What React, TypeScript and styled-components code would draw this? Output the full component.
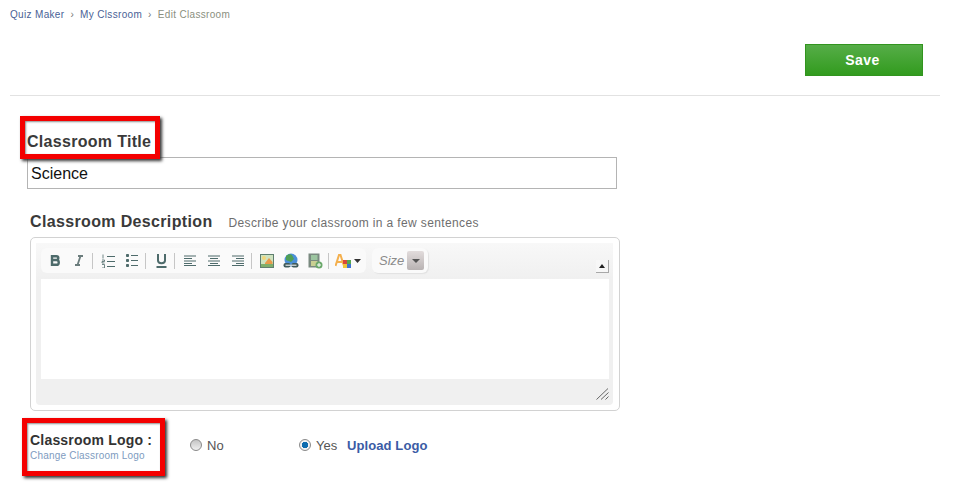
import React from "react";
import styled, { createGlobalStyle } from "styled-components";

const GlobalStyle = createGlobalStyle`
  html, body { margin: 0; padding: 0; background: #fff; }
  body { font-family: "Liberation Sans", Arial, sans-serif; }
`;

const Page = styled.div`
  width: 953px;
  height: 494px;
  overflow: hidden;
  box-sizing: border-box;
  padding: 8px 13px 0 10px;
`;

const Breadcrumb = styled.nav`
  display: flex;
  align-items: center;
  height: 13px;
  font-size: 10px;
  line-height: 13px;
  letter-spacing: 0.33px;
`;

const Crumb = styled.a<{ $current?: boolean }>`
  color: ${(p) => (p.$current ? "#8a8f80" : "#4a5f96")};
`;

const CrumbSep = styled.span`
  color: #777;
  margin: 0 6px 0 6px;
  font-size: 10px;
`;

const ActionBar = styled.div`
  display: flex;
  justify-content: flex-end;
  padding: 23px 17px 19px 0;
  border-bottom: 1px solid #e2e2e2;
`;

const SaveButton = styled.button`
  width: 118px;
  height: 32px;
  box-sizing: border-box;
  border: 1px solid #32941f;
  background: linear-gradient(#56ad48, #329b1e);
  color: #fff;
  font: bold 14px "Liberation Sans", Arial, sans-serif;
  letter-spacing: 0.4px;
  padding: 0 3px 0 0;
`;

const Form = styled.div`
  position: relative;
  padding: 36px 0 0 17px;
`;

const TitleLabel = styled.label`
  display: block;
  height: 25px;
  font-size: 16px;
  line-height: 20px;
  font-weight: bold;
  color: #3a3a3a;
  letter-spacing: 0.3px;
`;

const TitleInput = styled.input`
  display: block;
  width: 590px;
  height: 32px;
  box-sizing: border-box;
  border: 1px solid #b4b4b4;
  padding: 2px 3px 0;
  font: 16px "Liberation Sans", Arial, sans-serif;
  color: #111;
  outline: none;
`;

const DescriptionHead = styled.div`
  display: flex;
  align-items: baseline;
  gap: 16px;
  padding: 24px 0 0 3px;
  height: 24px;
`;

const DescriptionTitle = styled.h2`
  margin: 0;
  font-size: 16px;
  line-height: 18px;
  color: #3a3a3a;
  letter-spacing: 0.35px;
`;

const Hint = styled.span`
  font-size: 12px;
  color: #6e6e6e;
  letter-spacing: 0.37px;
`;

const EditorFrame = styled.div`
  width: 590px;
  height: 174px;
  box-sizing: border-box;
  margin-left: 3px;
  border: 1px solid #d2d2d2;
  border-radius: 5px;
  padding: 5px 6px 5px 5px;
`;

const EditorInner = styled.div`
  height: 162px;
  display: flex;
  flex-direction: column;
  background: #f0f0f0;
  border-radius: 4px;
`;

const ToolbarRow = styled.div`
  height: 36px;
  box-sizing: border-box;
  display: flex;
  align-items: flex-start;
  gap: 6px;
  padding: 5px 0 0 5px;
  background: linear-gradient(#f8f8f8, #f0f0f0);
  position: relative;
`;

const ToolGroup = styled.div`
  display: flex;
  align-items: center;
  height: 25px;
  background: #fafafa;
  border-radius: 6px;
  padding: 0 5px 0 2px;
`;

const ToolSlot = styled.span<{ $w?: number }>`
  display: flex;
  align-items: center;
  justify-content: center;
  width: ${(p) => p.$w ?? 24}px;
  height: 25px;
`;

const ToolSep = styled.span`
  width: 1px;
  height: 16px;
  background: #c6c6c6;
  margin: 0 3px 0 1px;
`;

const SizeBox = styled.div`
  display: flex;
  align-items: center;
  justify-content: space-between;
  width: 56px;
  height: 25px;
  box-sizing: border-box;
  background: #fafafa;
  border-radius: 6px;
  box-shadow: 1px 1px 1px #e2e2e2;
  padding: 0 4px 0 7px;
  font-size: 13px;
  font-style: italic;
  color: #8c8c8c;
`;

const SizeArrow = styled.span`
  display: flex;
  align-items: center;
  justify-content: center;
  width: 17px;
  height: 19px;
  border-radius: 2px;
  background: linear-gradient(#e2dcdc, #b8b2b2);

  &::after {
    content: "";
    border-left: 4px solid transparent;
    border-right: 4px solid transparent;
    border-top: 4px solid #555;
  }
`;

const CollapseButton = styled.button`
  position: absolute;
  right: 4px;
  top: 17px;
  width: 13px;
  height: 13px;
  box-sizing: border-box;
  padding: 0;
  border: 0;
  border-right: 1px solid #a8a8a8;
  border-bottom: 1px solid #a8a8a8;
  background: #f7f7f7;
  display: flex;
  align-items: center;
  justify-content: center;

  &::after {
    content: "";
    border-left: 3px solid transparent;
    border-right: 3px solid transparent;
    border-bottom: 4px solid #222;
  }
`;

const EditArea = styled.div`
  height: 100px;
  margin: 0 4px 0 5px;
  background: #fff;
`;

const EditorFooter = styled.div`
  flex: 1;
  display: flex;
  justify-content: flex-end;
  align-items: flex-end;
  padding: 0 4px 5px 0;
`;

const LogoRow = styled.div`
  display: flex;
  align-items: flex-start;
  padding: 22px 0 0 3px;
`;

const LogoLabel = styled.div`
  width: 160px;
`;

const LogoTitle = styled.div`
  font-size: 14px;
  line-height: 15px;
  font-weight: bold;
  color: #333;
  letter-spacing: 0.2px;
`;

const LogoLink = styled.a`
  display: block;
  font-size: 10px;
  line-height: 13px;
  margin-top: 1px;
  color: #7e9bc0;
  letter-spacing: 0.2px;
`;

const RadioOption = styled.label<{ $w: number }>`
  display: flex;
  align-items: center;
  gap: 5px;
  width: ${(p) => p.$w}px;
  height: 14px;
  margin-top: 5px;
  font-size: 13px;
  color: #555;
`;

const RadioDot = styled.span<{ $on?: boolean }>`
  width: 12px;
  height: 12px;
  margin-top: -1px;
  box-sizing: border-box;
  border-radius: 50%;
  border: 1px solid #8a8a8a;
  background: ${(p) =>
    p.$on
      ? "radial-gradient(circle, #0f6cae 0 3px, #f2f2f2 3.5px)"
      : "linear-gradient(#c4c4c4, #f0f0f0)"};
`;

const UploadLink = styled.a`
  margin: 6px 0 0 -23px;
  font-size: 13px;
  line-height: 14px;
  font-weight: bold;
  letter-spacing: 0.1px;
  color: #3b5ba5;
`;

const Highlight = styled.div<{ $left: number; $top: number; $w: number; $h: number }>`
  position: absolute;
  left: ${(p) => p.$left}px;
  top: ${(p) => p.$top}px;
  width: ${(p) => p.$w}px;
  height: ${(p) => p.$h}px;
  box-sizing: border-box;
  border: 5px solid #f40000;
  box-shadow: 2px 2px 3px #333, inset 1px 1px 2px rgba(0, 0, 0, 0.45);
  pointer-events: none;
`;

const ink = "#4e6b6b";

const BoldIcon = () => (
  <svg width="10" height="11" viewBox="0 0 10 11" fill="none" stroke={ink} strokeWidth="2.4">
    <path d="M1 1.200h5.500c2.400 0 2.400 3.800 0 3.800H1M6.500 5c3 0 3 4.800 0 4.800H1M2 0v11" />
  </svg>
);

const ItalicIcon = () => (
  <svg width="8" height="11" viewBox="0 0 8 11" fill="none" stroke="#6b7c7c" strokeWidth="1.800">
    <path d="M3 1h5M0 10h5M5.500 1 2.500 10" />
  </svg>
);

const OrderedIcon = () => (
  <svg width="14" height="14" viewBox="0 0 14 14" stroke={ink}>
    <path d="M6 2.500h8M6 7.500h8M6 12.500h8" />
    <path d="M2 0.500v4M1 6h2.500v1.500H1V9h2.500M1 10.500h2.500V14H1" strokeWidth="0.8" fill="none" />
  </svg>
);

const BulletIcon = () => (
  <svg width="12" height="13" viewBox="0 0 12 13" stroke={ink} fill={ink}>
    <path d="M0.500 0.500h2v2h-2zM0.500 5.500h2v2h-2zM0.500 10.500h2v2h-2z" />
    <path d="M5 1.500h7M5 6.500h7M5 11.500h7" />
  </svg>
);

const UnderlineIcon = () => (
  <svg width="11" height="14" viewBox="0 0 11 14" fill="none" stroke={ink} strokeWidth="2">
    <path d="M2 0v6.500c0 3.500 7 3.500 7 0V0" />
    <path d="M0.500 13h10" />
  </svg>
);

const AlignIcon = ({ mode }: { mode: "left" | "center" | "right" }) => {
  const short = mode === "left" ? "M0 3.500h8M0 8.500h8" : mode === "center" ? "M2 3.500h8M2 8.500h8" : "M4 3.500h8M4 8.500h8";
  return (
    <svg width="12" height="11" viewBox="0 0 12 11" fill="none" stroke={ink}>
      <path d="M0 1h12M0 6h12M0 10.500h12" />
      <path d={short} />
    </svg>
  );
};

const ImageIcon = () => (
  <svg width="14" height="14" viewBox="0 0 14 14">
    <rect x="0.500" y="0.500" width="13" height="13" fill="#cfe3c0" stroke="#5f7f6f" />
    <circle cx="4" cy="4" r="2" fill="#f2d77a" />
    <path d="M5 9l4-5 3.500 4v2H5z" fill="#e89a4a" />
    <path d="M1 10h12v3H1z" fill="#7fae6a" />
  </svg>
);

const LinkIcon = () => (
  <svg width="16" height="16" viewBox="0 0 16 16">
    <circle cx="8" cy="7" r="6.500" fill="#4a8fd8" />
    <path d="M3 3c2-2 5-2 6-1l2 4-3 3-5-2z" fill="#4f9f55" />
    <rect x="0.500" y="10" width="7" height="4.500" rx="2" fill="#3f5a5a" />
    <rect x="8.500" y="10" width="7" height="4.500" rx="2" fill="#3f5a5a" />
    <path d="M2.500 12.200h11" stroke="#fff" />
  </svg>
);

const VideoIcon = () => (
  <svg width="15" height="16" viewBox="0 0 15 16">
    <rect x="0.500" y="0.500" width="11" height="14" fill="#7a8a80" />
    <rect x="3" y="2" width="6.500" height="5" fill="#9cc5a0" />
    <rect x="3" y="8" width="6.500" height="5" fill="#c9cf92" />
    <circle cx="11" cy="12" r="3.500" fill="#6aa86a" />
    <path d="M9 12h4M11 10v4" stroke="#fff" />
  </svg>
);

const ColorIcon = () => (
  <svg width="16" height="14" viewBox="0 0 16 14">
    <path d="M0.500 12 4 1h1.500L9 12M2 8h5.500" fill="none" stroke="#f4b04e" strokeWidth="2" />
    <rect x="8" y="6" width="4" height="4" fill="#d9483b" />
    <rect x="12" y="6" width="4" height="4" fill="#58a84e" />
    <rect x="8" y="10" width="4" height="4" fill="#f0c53a" />
    <rect x="12" y="10" width="4" height="4" fill="#3f74d0" />
  </svg>
);

const ColorCaret = () => (
  <svg width="7" height="4" viewBox="0 0 7 4">
    <path d="M0 0h7L3.500 4z" fill="#333" />
  </svg>
);

const ResizeGrip = () => (
  <svg width="13" height="12" viewBox="0 0 13 12" stroke="#666" fill="none">
    <path d="M0.500 11.500 12 0.500M5 11.500 12.500 4.500M9.500 11.500 12.500 8.500" />
  </svg>
);

export default function App() {
  return (
    <Page>
      <GlobalStyle />
      <Breadcrumb>
        <Crumb>Quiz Maker</Crumb>
        <CrumbSep>›</CrumbSep>
        <Crumb>My Clssroom</Crumb>
        <CrumbSep>›</CrumbSep>
        <Crumb $current>Edit Classroom</Crumb>
      </Breadcrumb>
      <ActionBar>
        <SaveButton>Save</SaveButton>
      </ActionBar>
      <Form>
        <TitleLabel>Classroom Title</TitleLabel>
        <TitleInput defaultValue="Science" />
        <DescriptionHead>
          <DescriptionTitle>Classroom Description</DescriptionTitle>
          <Hint>Describe your classroom in a few sentences</Hint>
        </DescriptionHead>
        <EditorFrame>
          <EditorInner>
            <ToolbarRow>
              <ToolGroup>
                <ToolSlot><BoldIcon /></ToolSlot>
                <ToolSlot><ItalicIcon /></ToolSlot>
                <ToolSep />
                <ToolSlot><OrderedIcon /></ToolSlot>
                <ToolSlot><BulletIcon /></ToolSlot>
                <ToolSep />
                <ToolSlot><UnderlineIcon /></ToolSlot>
                <ToolSep />
                <ToolSlot><AlignIcon mode="left" /></ToolSlot>
                <ToolSlot><AlignIcon mode="center" /></ToolSlot>
                <ToolSlot><AlignIcon mode="right" /></ToolSlot>
                <ToolSep />
                <ToolSlot><ImageIcon /></ToolSlot>
                <ToolSlot><LinkIcon /></ToolSlot>
                <ToolSlot><VideoIcon /></ToolSlot>
                <ToolSep />
                <ToolSlot $w={22}><ColorIcon /></ToolSlot>
                <ColorCaret />
              </ToolGroup>
              <SizeBox>
                Size
                <SizeArrow />
              </SizeBox>
              <CollapseButton aria-label="collapse" />
            </ToolbarRow>
            <EditArea />
            <EditorFooter>
              <ResizeGrip />
            </EditorFooter>
          </EditorInner>
        </EditorFrame>
        <LogoRow>
          <LogoLabel>
            <LogoTitle>Classroom Logo :</LogoTitle>
            <LogoLink>Change Classroom Logo</LogoLink>
          </LogoLabel>
          <RadioOption $w={109}><RadioDot />No</RadioOption>
          <RadioOption $w={71}><RadioDot $on />Yes</RadioOption>
          <UploadLink>Upload Logo</UploadLink>
        </LogoRow>
        <Highlight $left={10} $top={20} $w={140} $h={43} />
        <Highlight $left={12} $top={322} $w={143} $h={58} />
      </Form>
    </Page>
  );
}
